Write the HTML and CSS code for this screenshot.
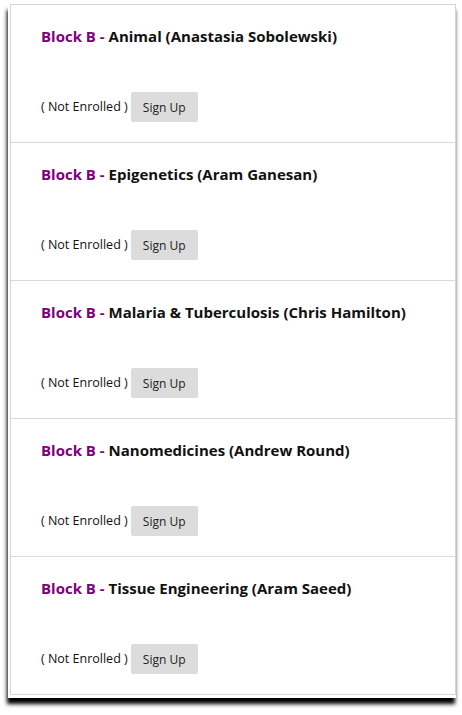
FILE: index.html
```html
<!DOCTYPE html>
<html>
<head>
<meta charset="utf-8">
<link rel="stylesheet" href="styles.css">
</head>
<body>
<div class="window">
  <div class="list">
    <div class="row">
      <div class="title"><span class="block">Block B - </span>Animal (Anastasia Sobolewski)</div>
      <div class="status"><span class="state">( Not Enrolled )</span><button class="btn">Sign Up</button></div>
    </div>
    <div class="row">
      <div class="title"><span class="block">Block B - </span>Epigenetics (Aram Ganesan)</div>
      <div class="status"><span class="state">( Not Enrolled )</span><button class="btn">Sign Up</button></div>
    </div>
    <div class="row">
      <div class="title"><span class="block">Block B - </span>Malaria &amp; Tuberculosis (Chris Hamilton)</div>
      <div class="status"><span class="state">( Not Enrolled )</span><button class="btn">Sign Up</button></div>
    </div>
    <div class="row">
      <div class="title"><span class="block">Block B - </span>Nanomedicines (Andrew Round)</div>
      <div class="status"><span class="state">( Not Enrolled )</span><button class="btn">Sign Up</button></div>
    </div>
    <div class="row">
      <div class="title"><span class="block">Block B - </span>Tissue Engineering (Aram Saeed)</div>
      <div class="status"><span class="state">( Not Enrolled )</span><button class="btn">Sign Up</button></div>
    </div>
  </div>
</div>
</body>
</html>
```

FILE: styles.css
```css
html, body {
  margin: 0;
  padding: 0;
  background: #fff;
}
body {
  font-family: "Open Sans", "Noto Sans", sans-serif;
  padding-top: 4px;
  padding-bottom: 14px;
}
.window {
  margin-left: 8px;
  width: 448px;
  padding: 0 0 3px 2px;
  box-sizing: border-box;
  background: #fff;
  box-shadow: -1px 6px 4px 0 rgba(0, 0, 0, 1);
}
.list {
  border: 1px solid #d4d4d4;
  border-bottom: none;
}
.row {
  padding: 21px 30px 20px;
  border-bottom: 1px solid #d9d9d9;
}
.title {
  font-size: 15px;
  font-weight: 700;
  line-height: 20px;
  color: #111;
  white-space: nowrap;
}
.block {
  color: #800080;
}
.status {
  margin-top: 46px;
  display: flex;
  align-items: center;
  height: 30px;
}
.state {
  font-size: 12.5px;
  color: #111;
  margin-right: 3px;
  position: relative;
  top: -1px;
}
.btn {
  font-family: "Open Sans", "Noto Sans", sans-serif;
  font-size: 12px;
  color: #222;
  background: #dcdcdc;
  border: none;
  border-radius: 2px;
  width: 67px;
  height: 30px;
  padding: 0;
}
```
